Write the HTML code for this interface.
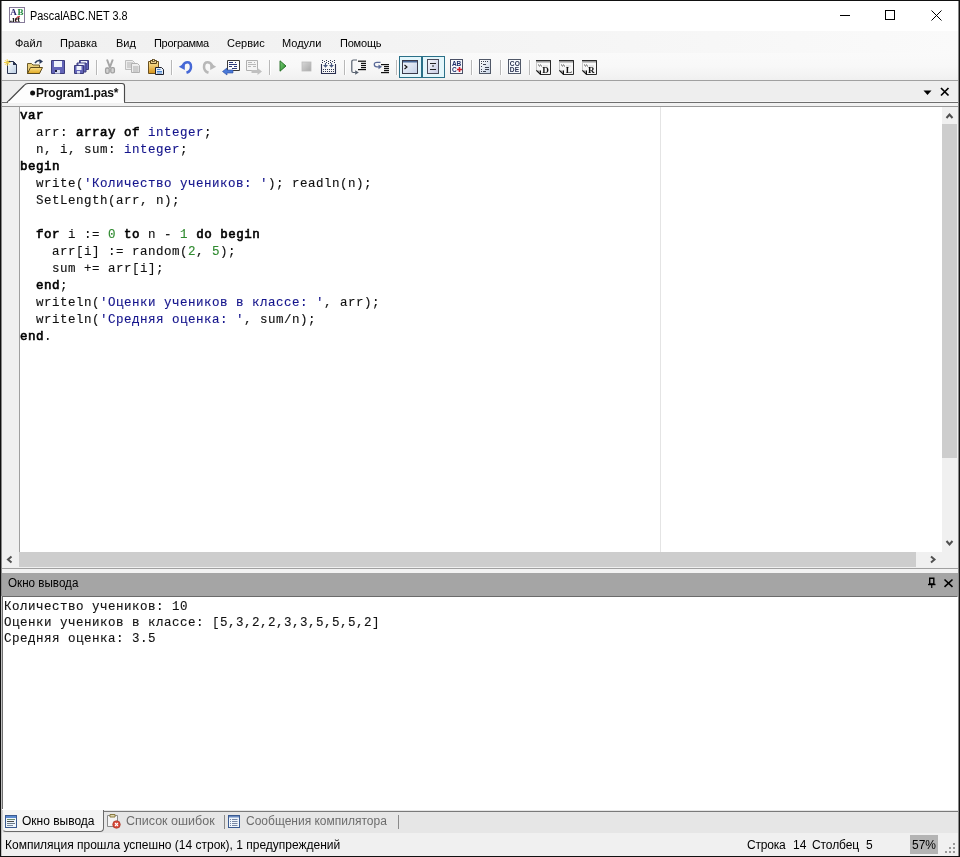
<!DOCTYPE html>
<html><head><meta charset="utf-8">
<style>
*{margin:0;padding:0;box-sizing:border-box}
html,body{width:960px;height:857px;overflow:hidden;background:#f0f0f0;font-family:"Liberation Sans",sans-serif;font-size:12px;color:#000}
.a{position:absolute}
.t{position:absolute;white-space:pre;line-height:1}
svg{position:absolute;overflow:visible}
.code{font-family:"Liberation Mono",monospace;font-size:12.5px;letter-spacing:0.5px;line-height:17px;white-space:pre;color:#101010;-webkit-text-stroke:0.12px currentColor}
.k{font-weight:normal;color:#000;-webkit-text-stroke:0.6px #000}
.s{color:#14148c}
.ty{color:#14148c}
.n{color:#2f8a2f}
.sep{position:absolute;top:60px;width:1px;height:15px;background:#b8b8b8;box-shadow:1px 0 0 #fff}
#root{position:absolute;left:0;top:0;width:960px;height:857px;will-change:transform;overflow:hidden}
</style></head><body><div id="root">
<!-- title bar -->
<div class="a" style="left:0;top:0;width:960px;height:31px;background:#fff"></div>
<div class="t" style="left:30px;top:10px;font-size:12px;color:#000;transform:scaleX(0.905);transform-origin:0 0">PascalABC.NET 3.8</div>
<!-- menu -->
<div class="a" style="left:0;top:31px;width:960px;height:22px;background:linear-gradient(to right,#f0f0f0 0,#f3f3f3 40%,#fafafa 100%)"></div>
<div class="t" style="left:15px;top:38px;font-size:11px">Файл</div>
<div class="t" style="left:60px;top:38px;font-size:11px">Правка</div>
<div class="t" style="left:116px;top:38px;font-size:11px">Вид</div>
<div class="t" style="left:154px;top:38px;font-size:11px;letter-spacing:-0.3px">Программа</div>
<div class="t" style="left:227px;top:38px;font-size:11px">Сервис</div>
<div class="t" style="left:282px;top:38px;font-size:11px">Модули</div>
<div class="t" style="left:340px;top:38px;font-size:11px;letter-spacing:-0.2px">Помощь</div>
<!-- toolbar -->
<div class="a" style="left:0;top:53px;width:960px;height:27px;background:linear-gradient(#fafafa,#f8f8f8 50%,#f0f0f0)"></div>
<div class="a" style="left:0;top:80px;width:960px;height:1px;background:#a0a0a0"></div>
<!-- document tab strip -->
<div class="a" style="left:0;top:81px;width:960px;height:25px;background:#eeeeee"></div>
<div class="a" style="left:0;top:101px;width:960px;height:1px;background:#f6f6f6"></div>
<div class="a" style="left:0;top:102px;width:960px;height:1px;background:#6e6e6e"></div>
<div class="a" style="left:0;top:103px;width:960px;height:3px;background:#f2f2f2"></div>
<div class="a" style="left:0;top:106px;width:960px;height:1px;background:#989898"></div>
<svg style="left:0;top:80px" width="140" height="26"><rect x="8" y="21" width="116" height="2" fill="#fdfdfd"/><path d="M7 22.5 L24 5.5 Q25.5 3.5 28 3.5 L122 3.5 Q124.5 3.5 124.5 6 L124.5 22.5" fill="#fdfdfd" stroke="#4a4a4a" stroke-width="1.15"/><rect x="8.5" y="21" width="115.5" height="2" fill="#fdfdfd"/></svg>
<svg style="left:30px;top:90px" width="6" height="6"><circle cx="2.6" cy="2.9" r="2.5" fill="#111"/></svg>
<div class="t" style="left:36px;top:87px;font-size:12px;font-weight:bold;color:#111;letter-spacing:-0.2px">Program1.pas*</div>
<svg style="left:923px;top:90px" width="10" height="6"><path d="M0.5 0.5 L8.5 0.5 L4.5 5 Z" fill="#000"/></svg>
<svg style="left:940px;top:87px" width="10" height="10"><path d="M1 1 L8.5 8.5 M8.5 1 L1 8.5" stroke="#000" stroke-width="1.7"/></svg>
<!-- editor -->
<div class="a" style="left:1px;top:107px;width:958px;height:445px;background:#fff"></div>
<div class="a" style="left:1px;top:107px;width:18px;height:445px;background:#f0f0f0"></div>
<div class="a" style="left:19px;top:107px;width:1px;height:445px;background:#a0a0a0"></div>
<div class="a" style="left:660px;top:107px;width:1px;height:445px;background:#e4e4e4"></div>
<!-- v scrollbar -->
<div class="a" style="left:942px;top:107px;width:16px;height:445px;background:#f0f0f0"></div>
<div class="a" style="left:942px;top:124px;width:15px;height:334px;background:#cdcdcd"></div>
<svg style="left:945px;top:112px" width="10" height="8"><path d="M1.5 6 L4.5 2.5 L7.5 6" fill="none" stroke="#505050" stroke-width="2"/></svg>
<svg style="left:945px;top:539px" width="10" height="8"><path d="M1.5 2 L4.5 5.5 L7.5 2" fill="none" stroke="#505050" stroke-width="2"/></svg>
<!-- h scrollbar -->
<div class="a" style="left:1px;top:552px;width:958px;height:16px;background:#f0f0f0"></div>
<div class="a" style="left:19px;top:552px;width:897px;height:15px;background:#cdcdcd"></div>
<svg style="left:6px;top:555px" width="8" height="10"><path d="M5.5 1.5 L2 4.5 L5.5 7.5" fill="none" stroke="#505050" stroke-width="2"/></svg>
<svg style="left:929px;top:555px" width="8" height="10"><path d="M2 1.5 L5.5 4.5 L2 7.5" fill="none" stroke="#505050" stroke-width="2"/></svg>
<div class="a" style="left:0;top:568px;width:960px;height:1px;background:#a0a0a0"></div>
<div class="a" style="left:0;top:569px;width:960px;height:4px;background:#f2f2f2"></div>
<div class="a code" style="left:20px;top:108px"><span class="k">var</span>
  arr: <span class="k">array</span> <span class="k">of</span> <span class="ty">integer</span>;
  n, i, sum: <span class="ty">integer</span>;
<span class="k">begin</span>
  write(<span class="s">'Количество учеников: '</span>); readln(n);
  SetLength(arr, n);

  <span class="k">for</span> i := <span class="n">0</span> <span class="k">to</span> n - <span class="n">1</span> <span class="k">do</span> <span class="k">begin</span>
    arr[i] := random(<span class="n">2</span>, <span class="n">5</span>);
    sum += arr[i];
  <span class="k">end</span>;
  writeln(<span class="s">'Оценки учеников в классе: '</span>, arr);
  writeln(<span class="s">'Средняя оценка: '</span>, sum/n);
<span class="k">end</span>.</div>
<!-- output header -->
<div class="a" style="left:1px;top:573px;width:958px;height:24px;background:#a5a5a5"></div>
<div class="a" style="left:1px;top:596px;width:956px;height:1px;background:#6a6a6a"></div>
<div class="t" style="left:8px;top:577px;font-size:12px;color:#000;transform:scaleX(0.97);transform-origin:0 0">Окно вывода</div>
<!-- output -->
<div class="a" style="left:1px;top:597px;width:958px;height:213px;background:#fff"></div>
<div class="a" style="left:2px;top:597px;width:1px;height:212px;background:#707070"></div>
<div class="a code" style="left:4px;top:599px;color:#111;line-height:16px">Количество учеников: 10
Оценки учеников в классе: [5,3,2,2,3,3,5,5,5,2]
Средняя оценка: 3.5</div>
<!-- bottom tabs -->
<div class="a" style="left:1px;top:810px;width:958px;height:23px;background:#e6e6e6"></div>
<div class="a" style="left:104px;top:811px;width:855px;height:1px;background:#7a7a7a"></div>
<div class="a" style="left:2px;top:810px;width:102px;height:22px;background:#f4f4f4;border:1px solid #6a6a6a;border-left-color:#d0d0d0;border-top:none;border-radius:0 0 4px 4px"></div>
<div class="t" style="left:22px;top:815px;font-size:12px;color:#000">Окно вывода</div>
<div class="t" style="left:126px;top:815px;font-size:12.5px;color:#6d6d6d">Список ошибок</div>
<div class="a" style="left:224px;top:815px;width:1px;height:14px;background:#8a8a8a"></div>
<div class="t" style="left:246px;top:815px;font-size:12px;color:#6d6d6d">Сообщения компилятора</div>
<div class="a" style="left:398px;top:815px;width:1px;height:14px;background:#8a8a8a"></div>
<!-- status -->
<div class="a" style="left:1px;top:833px;width:958px;height:23px;background:#f0f0f0"></div>
<div class="t" style="left:5px;top:839px;font-size:12px">Компиляция прошла успешно (14 строк), 1 предупреждений</div>
<div class="t" style="left:747px;top:839px;font-size:12px;letter-spacing:-0.2px">Строка</div>
<div class="t" style="left:793px;top:839px;font-size:12px">14</div>
<div class="t" style="left:812px;top:839px;font-size:12px;letter-spacing:-0.1px">Столбец</div>
<div class="t" style="left:866px;top:839px;font-size:12px">5</div>
<div class="a" style="left:910px;top:835px;width:28px;height:19px;background:#b4b4b4"></div>
<div class="t" style="left:912px;top:839px;font-size:12px">57%</div>
<svg style="left:944px;top:842px" width="14" height="12"><g fill="#9a9a9a"><rect x="9" y="1" width="2" height="2"/><rect x="5" y="5" width="2" height="2"/><rect x="9" y="5" width="2" height="2"/><rect x="1" y="9" width="2" height="2"/><rect x="5" y="9" width="2" height="2"/><rect x="9" y="9" width="2" height="2"/></g></svg>
<!-- window border -->
<div class="a" style="left:0;top:0;width:960px;height:1px;background:#111"></div>
<div class="a" style="left:0;top:0;width:1px;height:857px;background:#111"></div>
<div class="a" style="left:959px;top:0;width:1px;height:857px;background:#151515"></div>
<div class="a" style="left:958px;top:1px;width:1px;height:855px;background:#888"></div>
<div class="a" style="left:1px;top:1px;width:1px;height:595px;background:#888"></div><div class="a" style="left:1px;top:596px;width:1px;height:260px;background:#c0c0c0"></div>
<div class="a" style="left:0;top:856px;width:960px;height:1px;background:#111"></div>
<!-- title buttons -->
<div class="a" style="left:840px;top:15px;width:10px;height:1px;background:#000"></div>
<div class="a" style="left:885px;top:10px;width:10px;height:10px;border:1px solid #000"></div>
<svg style="left:931px;top:10px" width="11" height="11"><path d="M0.5 0.5 L10.5 10.5 M10.5 0.5 L0.5 10.5" stroke="#000" stroke-width="1"/></svg>
<!-- ICONS -->
<!-- app icon -->
<svg style="left:9px;top:7px" width="16" height="16"><rect x="0.5" y="0.5" width="15" height="15" fill="#fff" stroke="#857a98"/><text x="1.2" y="7.6" font-family="Liberation Serif" font-size="9" font-weight="bold" fill="#25206a">A</text><text x="8.6" y="7.6" font-family="Liberation Serif" font-size="9" font-weight="bold" fill="#1f8a3c">B</text><path d="M6.5 14.5 Q7 9.5 11 9.5" stroke="#c85050" stroke-width="1.3" fill="none"/><text x="0.8" y="14.6" font-family="Liberation Serif" font-size="7.5" font-weight="bold" fill="#111" letter-spacing="-0.3">.ɹet</text></svg>
<!-- new -->
<svg style="left:3px;top:58px" width="16" height="17"><defs><linearGradient id="gp" x1="0" y1="0" x2="1" y2="1"><stop offset="0" stop-color="#ffffff"/><stop offset="1" stop-color="#b9cde3"/></linearGradient></defs><path d="M4.5 3.5 H10.5 L13.5 6.5 V15.5 H4.5 Z" fill="url(#gp)" stroke="#2b3550"/><path d="M10 3 V7 H14 Z" fill="#2b3550"/><path d="M1 4.5 H7.5 M4.2 1.2 V7.8 M2 2.2 L6.5 6.8 M6.5 2.2 L2 6.8" stroke="#f2d24a" stroke-width="1"/></svg>
<!-- open -->
<svg style="left:26px;top:58px" width="18" height="17"><defs><linearGradient id="gf" x1="0" y1="0" x2="0" y2="1"><stop offset="0" stop-color="#fbe08a"/><stop offset="1" stop-color="#e0a820"/></linearGradient></defs><path d="M1.5 5.5 H5.5 L7 7 H13.5 V15.5 H1.5 Z" fill="#e9cf7a" stroke="#6a5a2a"/><path d="M1.5 15.5 L4.5 9.5 H16.5 L13.5 15.5 Z" fill="url(#gf)" stroke="#5f4c1c"/><path d="M9 5 Q11.5 1.5 15 3" stroke="#2a3a5a" stroke-width="1.5" fill="none"/><path d="M13.5 1 L17 3.5 L13.5 6 Z" fill="#2a3a5a"/></svg>
<!-- save -->
<svg style="left:50px;top:58px" width="16" height="17"><path d="M1.5 2.5 H14.5 V15.5 H1.5 Z" fill="#6264b8" stroke="#3c3c7c"/><rect x="4" y="3" width="8" height="6" fill="#eef2fb"/><rect x="5" y="12" width="5" height="3.5" fill="#d8def2"/><rect x="5" y="12" width="2" height="2" fill="#1d1d3a"/></svg>
<!-- save all -->
<svg style="left:73px;top:58px" width="16" height="17"><path d="M6.5 2.5 H15.5 V11.5 H6.5 Z" fill="#6264b8" stroke="#3c3c7c"/><rect x="8" y="3" width="6" height="2" fill="#eef2fb"/><path d="M4 5 H13 V14 H4 Z" fill="#6264b8" stroke="#3c3c7c"/><rect x="5.5" y="5.5" width="6" height="2" fill="#eef2fb"/><path d="M1.5 7.5 H10.5 V15.5 H1.5 Z" fill="#6264b8" stroke="#3c3c7c"/><rect x="3.5" y="8" width="5" height="4" fill="#eef2fb"/><rect x="4" y="13" width="3" height="2.5" fill="#d8def2"/></svg>
<div class="sep" style="left:96px"></div>
<!-- cut -->
<svg style="left:103px;top:58px" width="14" height="17"><path d="M4 1.5 L7.2 10 M9.8 1.5 L6.6 10" stroke="#a6a6a6" stroke-width="2" fill="none"/><rect x="2.6" y="10" width="3.6" height="5.4" rx="1.3" fill="#d4d4d4" stroke="#a0a0a0" stroke-width="1.3"/><rect x="7.8" y="9.6" width="3.6" height="5.2" rx="1.3" fill="#d4d4d4" stroke="#a0a0a0" stroke-width="1.3"/></svg>
<!-- copy -->
<svg style="left:124px;top:58px" width="18" height="17"><path d="M1.5 2.5 H8.5 L10.5 4.5 V11.5 H1.5 Z" fill="#ececec" stroke="#bdbdbd"/><path d="M3 5 H9 M3 7 H9 M3 9 H8" stroke="#b4b4b4" stroke-width="1.1"/><path d="M7.5 5.5 H13.5 L15.5 7.5 V14.5 H7.5 Z" fill="#eeeeee" stroke="#b0b0b0"/><path d="M9 9 H14.5 M9 11 H14.5 M9 13 H14.5" stroke="#aaaaaa" stroke-width="1.1"/></svg>
<!-- paste -->
<svg style="left:147px;top:58px" width="18" height="17"><defs><linearGradient id="gc" x1="0" y1="0" x2="0" y2="1"><stop offset="0" stop-color="#fbe7a0"/><stop offset="1" stop-color="#d89418"/></linearGradient></defs><path d="M1.5 3.5 H11.5 V15.5 H1.5 Z" fill="url(#gc)" stroke="#6a5020"/><path d="M3.5 2.5 H9.5 V5.5 H3.5 Z" fill="#e8d090" stroke="#5a4418"/><rect x="5.5" y="1.5" width="2" height="2" fill="#fff2c0" stroke="#5a4418" stroke-width="0.8"/><path d="M8.5 9.5 H14.5 L16.5 11.5 V16.5 H8.5 Z" fill="#e6eef8" stroke="#1e1e2a"/><path d="M10 11.5 H13.5 M10 13.5 H15 M10 15 H15" stroke="#4a86d0" stroke-width="1.1"/></svg>
<div class="sep" style="left:171px"></div>
<!-- undo -->
<svg style="left:178px;top:58px" width="16" height="17"><path d="M4.5 8 Q6.5 4.3 9.3 4.3 Q13 4.3 13 9 Q13 13.3 8.5 14.8" stroke="#4668d6" stroke-width="2.5" fill="none"/><path d="M0.8 8.8 L6.8 5.2 V12 Z" fill="#4668d6"/></svg>
<!-- redo -->
<svg style="left:201px;top:58px" width="16" height="17"><path d="M11.5 8 Q9.5 4.3 6.7 4.3 Q3 4.3 3 9 Q3 13.3 7.5 14.8" stroke="#b8b8b8" stroke-width="2.5" fill="none"/><path d="M15.2 8.8 L9.2 5.2 V12 Z" fill="#b8b8b8"/></svg>
<!-- nav back -->
<svg style="left:222px;top:58px" width="18" height="17"><path d="M5.5 2.5 H17.5 V12.5 H5.5 Z" fill="#fbfbfb" stroke="#3a3a3a"/><path d="M7 4.5 H11 M13 4.5 H14 M7 6.5 H15 M7 8.5 H10 M12 8.5 H15 M10 10.5 H15" stroke="#2a3a7a"/><path d="M0.5 13.5 L5 10 V12 H11 V15 H5 V17 Z" fill="#4a7ad8" stroke="#2a4aa0" stroke-width="0.6"/></svg>
<!-- nav fwd -->
<svg style="left:245px;top:58px" width="18" height="17"><path d="M1.5 2.5 H12.5 V12.5 H1.5 Z" fill="#f4f4f4" stroke="#b0b0b0"/><path d="M3 4.5 H7 M9 4.5 H10 M3 6.5 H11 M3 8.5 H6 M8 8.5 H11" stroke="#b8b8b8"/><path d="M17 13.5 L12.5 10 V12 H6.5 V15 H12.5 V17 Z" fill="#c0c0c0"/></svg>
<div class="sep" style="left:269px"></div>
<!-- run -->
<svg style="left:279px;top:60px" width="10" height="13"><defs><linearGradient id="gr" x1="0" y1="0" x2="1" y2="1"><stop offset="0" stop-color="#7ad07a"/><stop offset="1" stop-color="#2a8a2a"/></linearGradient></defs><path d="M1 0.8 L7 6 L1 11.2 Z" fill="url(#gr)" stroke="#1f6a1f" stroke-width="0.9"/></svg>
<!-- stop -->
<svg style="left:301px;top:61px" width="12" height="12"><defs><linearGradient id="gs" x1="0" y1="0" x2="1" y2="1"><stop offset="0" stop-color="#d8d8d8"/><stop offset="1" stop-color="#a8a8a8"/></linearGradient></defs><rect x="1" y="1" width="9" height="9" fill="url(#gs)" stroke="#bcbcbc" stroke-width="0.8"/></svg>
<!-- build -->
<svg style="left:318px;top:56px" width="22" height="22"><g fill="#2e3450"><rect x="4" y="4" width="1" height="1"/><rect x="8" y="4" width="1" height="1"/><rect x="12" y="4" width="1" height="1"/><rect x="16" y="4" width="1" height="1"/><rect x="6" y="5" width="1" height="1"/><rect x="10" y="5" width="1" height="1"/><rect x="14" y="5" width="1" height="1"/><rect x="4" y="6" width="1" height="1"/><rect x="8" y="6" width="1" height="1"/><rect x="12" y="6" width="1" height="1"/><rect x="16" y="6" width="1" height="1"/><rect x="10" y="7" width="1" height="1"/><rect x="5" y="13" width="1" height="1"/><rect x="7" y="13" width="1" height="1"/><rect x="9" y="13" width="1" height="1"/><rect x="11" y="13" width="1" height="1"/><rect x="13" y="13" width="1" height="1"/><rect x="15" y="13" width="1" height="1"/><rect x="5" y="15" width="1" height="1"/><rect x="7" y="15" width="1" height="1"/><rect x="9" y="15" width="1" height="1"/><rect x="11" y="15" width="1" height="1"/><rect x="13" y="15" width="1" height="1"/><rect x="15" y="15" width="1" height="1"/></g><path d="M3.5 8 V17.5 H17.5 V8" stroke="#2a3050" stroke-width="1.1" fill="none"/><path d="M7.5 7 V10 M13.5 7 V10" stroke="#4a5a80" stroke-width="1.2"/><path d="M5 9 H10 L7.5 11.8 Z M11 9 H16 L13.5 11.8 Z" fill="#4a5a80"/></svg>
<div class="sep" style="left:344px"></div>
<!-- step into -->
<svg style="left:350px;top:59px" width="17" height="16"><path d="M7 1 H3.5 Q1.8 1 1.8 2.7 V12 Q1.8 13.5 3.3 13.5 H5.5" stroke="#56606e" stroke-width="1.2" fill="none"/><path d="M5.2 11.3 L8.8 13.5 L5.2 15.7 Z" fill="#56606e"/><g fill="#111"><rect x="8" y="1.6" width="8" height="1.2"/><rect x="11" y="3.8" width="5" height="1.2"/><rect x="11" y="5.9" width="5" height="1.2"/><rect x="11" y="8" width="5" height="1.2"/><rect x="8" y="10" width="8" height="1.2"/></g></svg>
<!-- step over -->
<svg style="left:373px;top:59px" width="17" height="16"><path d="M7.5 3.3 H4 Q1.3 3.3 1.3 5.5 Q1.3 7.8 4 7.8 H6" stroke="#5a6a98" stroke-width="1.3" fill="none"/><path d="M5.5 5.5 L9 7.8 L5.5 10.2 Z" fill="#5a6a98"/><g fill="#111"><rect x="8" y="5" width="8" height="1.2"/><rect x="11" y="7" width="5" height="1.2"/><rect x="11" y="9" width="5" height="1.2"/><rect x="11" y="11" width="5" height="1.2"/><rect x="8" y="13" width="8" height="1.2"/></g></svg>
<div class="sep" style="left:396px"></div>
<!-- checked buttons -->
<div class="a" style="left:399px;top:56px;width:23px;height:22px;background:#e4f6fb;border:1px solid #2a7088"></div>
<div class="a" style="left:422px;top:56px;width:23px;height:22px;background:#e4f6fb;border:1px solid #2a7088"></div>
<svg style="left:402px;top:60px" width="17" height="15"><defs><linearGradient id="gw" x1="0" y1="0" x2="1" y2="1"><stop offset="0" stop-color="#f4f8fc"/><stop offset="1" stop-color="#c4d0e6"/></linearGradient></defs><rect x="0.5" y="0.5" width="15" height="13" fill="url(#gw)" stroke="#3a3a4a"/><rect x="1" y="1" width="14" height="1.5" fill="#4a6a9a"/><path d="M2.5 5 L5 7 L2.5 9" stroke="#111" stroke-width="1.1" fill="none"/></svg>
<svg style="left:427px;top:59px" width="13" height="16"><defs><linearGradient id="gw2" x1="0" y1="0" x2="1" y2="1"><stop offset="0" stop-color="#f8f8fc"/><stop offset="1" stop-color="#c8cce4"/></linearGradient></defs><rect x="0.5" y="0.5" width="11" height="14" fill="url(#gw2)" stroke="#4a4a5a"/><path d="M3 4.5 H9 M6 6 V8 M3 10.5 H9" stroke="#222" stroke-width="1"/></svg>
<!-- abc+ -->
<svg style="left:450px;top:59px" width="14" height="16"><rect x="0.5" y="0.5" width="12" height="14" fill="#f6f9fd" stroke="#4a5066"/><text x="2" y="6.6" font-family="Liberation Sans" font-size="6.5" font-weight="bold" fill="#1e2e6a" letter-spacing="-0.3">AB</text><text x="2" y="13" font-family="Liberation Sans" font-size="6.5" font-weight="bold" fill="#1e2e6a">C</text><path d="M7 10.5 H12 M9.5 8 V13" stroke="#d01c2c" stroke-width="1.6"/></svg>
<div class="sep" style="left:471px"></div>
<!-- doc -->
<svg style="left:479px;top:59px" width="13" height="16"><defs><linearGradient id="gd" x1="0" y1="0" x2="1" y2="1"><stop offset="0" stop-color="#ffffff"/><stop offset="1" stop-color="#c8d4e6"/></linearGradient></defs><rect x="0.5" y="0.5" width="11" height="14" fill="url(#gd)" stroke="#505868"/><g fill="#3a4050"><rect x="2" y="2" width="1" height="1"/><rect x="4" y="2" width="1" height="1"/><rect x="6" y="2" width="1" height="1"/><rect x="8" y="2" width="1" height="1"/><rect x="2" y="4" width="1" height="1"/><rect x="2" y="7" width="1" height="1"/><rect x="2" y="10" width="1" height="1"/><rect x="2" y="12" width="1" height="1"/><rect x="4" y="5" width="3" height="1"/><rect x="6" y="8" width="4" height="1"/><rect x="6" y="10" width="4" height="1"/><rect x="4" y="12" width="3" height="1"/></g></svg>
<div class="sep" style="left:500px"></div>
<!-- code -->
<svg style="left:508px;top:59px" width="14" height="16"><rect x="0.5" y="0.5" width="12" height="14" fill="#f6f9fd" stroke="#505868"/><text x="1.8" y="6.8" font-family="Liberation Sans" font-size="6.6" font-weight="bold" fill="#283050" letter-spacing="0.2">CO</text><text x="1.8" y="13.2" font-family="Liberation Sans" font-size="6.6" font-weight="bold" fill="#283050" letter-spacing="0.2">DE</text></svg>
<div class="sep" style="left:529px"></div>
<!-- D L R -->
<svg style="left:0;top:0" width="1" height="1"><defs><linearGradient id="gh" x1="0" y1="0" x2="0" y2="1"><stop offset="0" stop-color="#606060"/><stop offset="1" stop-color="#d8d8d8"/></linearGradient></defs></svg>
<svg style="left:536px;top:60px" width="16" height="16"><path d="M0.5 2 V10" stroke="#c8c8c8"/><rect x="0" y="0" width="15" height="3" fill="url(#gh)"/><path d="M0 0.5 H14.5 V14.5 H4.5" stroke="#2a2a2a" fill="none"/><path d="M0.5 10.5 L4.5 10.5 V14.5 Z" fill="#9a9a9a"/><path d="M0.3 10.3 L4.7 14.7" stroke="#111" stroke-width="1.1"/><path d="M4.5 10.5 V14.5" stroke="#111"/><path d="M2.5 4.5 L3.5 6.5 M4.5 4.5 L5.5 6.5" stroke="#444" stroke-width="0.9"/><path d="M7 6 H12" stroke="#d8d8d8"/><text x="6.2" y="12.8" font-family="Liberation Serif" font-size="9.2" font-weight="bold" fill="#111">D</text></svg>
<svg style="left:559px;top:60px" width="16" height="16"><path d="M0.5 2 V10" stroke="#c8c8c8"/><rect x="0" y="0" width="15" height="3" fill="url(#gh)"/><path d="M0 0.5 H14.5 V14.5 H4.5" stroke="#2a2a2a" fill="none"/><path d="M0.5 10.5 L4.5 10.5 V14.5 Z" fill="#9a9a9a"/><path d="M0.3 10.3 L4.7 14.7" stroke="#111" stroke-width="1.1"/><path d="M4.5 10.5 V14.5" stroke="#111"/><path d="M2.5 4.5 L3.5 6.5 M4.5 4.5 L5.5 6.5" stroke="#444" stroke-width="0.9"/><path d="M7 6 H12" stroke="#d8d8d8"/><text x="6.8" y="12.8" font-family="Liberation Serif" font-size="9.2" font-weight="bold" fill="#111">L</text></svg>
<svg style="left:582px;top:60px" width="16" height="16"><path d="M0.5 2 V10" stroke="#c8c8c8"/><rect x="0" y="0" width="15" height="3" fill="url(#gh)"/><path d="M0 0.5 H14.5 V14.5 H4.5" stroke="#2a2a2a" fill="none"/><path d="M0.5 10.5 L4.5 10.5 V14.5 Z" fill="#9a9a9a"/><path d="M0.3 10.3 L4.7 14.7" stroke="#111" stroke-width="1.1"/><path d="M4.5 10.5 V14.5" stroke="#111"/><path d="M2.5 4.5 L3.5 6.5 M4.5 4.5 L5.5 6.5" stroke="#444" stroke-width="0.9"/><path d="M7 6 H12" stroke="#d8d8d8"/><text x="6.0" y="12.8" font-family="Liberation Serif" font-size="9.2" font-weight="bold" fill="#111">R</text></svg>
<!-- output header pin & close -->
<svg style="left:927px;top:577px" width="10" height="12"><path d="M2.7 1.2 H6.8 V7 H2.7 Z" fill="#a5a5a5" stroke="#000" stroke-width="1.4"/><path d="M1 7.5 H8.5" stroke="#000" stroke-width="1.4"/><path d="M4.75 8 V11" stroke="#000" stroke-width="1.2"/></svg>
<svg style="left:943px;top:578px" width="11" height="11"><path d="M1.5 1.5 L9.5 8.8 M9.5 1.5 L1.5 8.8" stroke="#000" stroke-width="1.6"/></svg>
<!-- bottom tab icons -->
<svg style="left:5px;top:815px" width="13" height="14"><rect x="0.5" y="0.5" width="11" height="12" fill="#eef5fc" stroke="#3a5a90"/><rect x="1" y="1" width="10" height="2" fill="#5a8ad0"/><rect x="2" y="4" width="8" height="1" fill="#6a8a6a"/><rect x="2" y="6" width="7" height="1" fill="#4a4a4a"/><rect x="2" y="8" width="8" height="1" fill="#6a7a8a"/><rect x="2" y="10" width="6" height="1" fill="#7a8aa0"/></svg>
<svg style="left:107px;top:813px" width="16" height="16"><path d="M0.5 2.5 H10.5 V13.5 H0.5 Z" fill="#f4f4f4" stroke="#8a8a8a"/><path d="M3 1.5 H8 V4 H3 Z" fill="#e0d8b0" stroke="#8a7a40"/><circle cx="9.5" cy="11.5" r="3.8" fill="#d84a3a" stroke="#a02a1a" stroke-width="0.6"/><path d="M8 10 L11 13 M11 10 L8 13" stroke="#fff" stroke-width="1.1"/></svg>
<svg style="left:228px;top:815px" width="13" height="14"><rect x="0.5" y="0.5" width="11" height="12" fill="#f0f6fc" stroke="#3a5a90"/><rect x="1" y="1" width="10" height="1.5" fill="#6a8ac0"/><path d="M4 4.5 H9.5 M4 6.5 H9.5 M4 8.5 H9.5 M4 10.5 H9.5" stroke="#6a7a9a" stroke-width="0.9"/><path d="M2 4.5 H3 M2 6.5 H3 M2 8.5 H3 M2 10.5 H3" stroke="#6a7a9a" stroke-width="0.9"/></svg>

</div></body></html>
